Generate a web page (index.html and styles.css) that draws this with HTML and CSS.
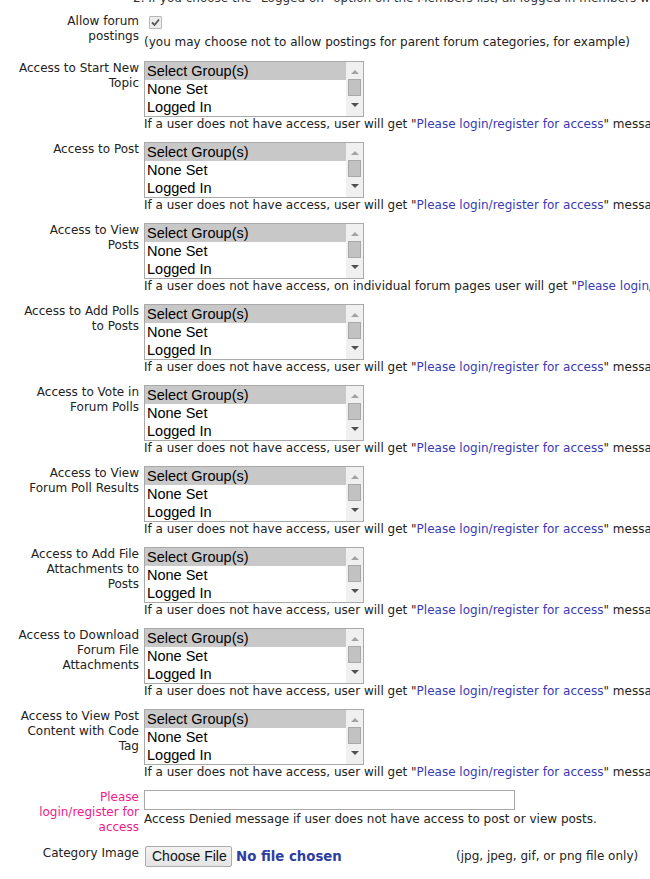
FILE: index.html
```html
<!DOCTYPE html>
<html>
<head>
<meta charset="utf-8">
<link rel="stylesheet" href="styles.css">
</head>
<body>
<div class="page">
  <div class="top-note">2. If you choose the "Logged on" option on the Members list, all logged in members will have access</div>

  <div class="row row-check">
    <div class="label">Allow forum postings</div>
    <div class="field">
      <span class="checkbox"><svg width="9" height="9" viewBox="0 0 9 9"><path d="M1 4.5 L3.5 7 L8 1.5" fill="none" stroke="#555" stroke-width="1.8"/></svg></span>
      <div class="help">(you may choose not to allow postings for parent forum categories, for example)</div>
    </div>
  </div>

  <div class="row">
    <div class="label">Access to Start New Topic</div>
    <div class="field">
      <div class="listbox"><div class="opts"><div class="opt sel">Select Group(s)</div><div class="opt">None Set</div><div class="opt">Logged In</div></div><div class="sb"><span class="arr up"></span><span class="thumb"></span><span class="arr down"></span></div></div>
      <div class="help">If a user does not have access, user will get "<span class="link">Please login/register for access</span>" message</div>
    </div>
  </div>

  <div class="row">
    <div class="label">Access to Post</div>
    <div class="field">
      <div class="listbox"><div class="opts"><div class="opt sel">Select Group(s)</div><div class="opt">None Set</div><div class="opt">Logged In</div></div><div class="sb"><span class="arr up"></span><span class="thumb"></span><span class="arr down"></span></div></div>
      <div class="help">If a user does not have access, user will get "<span class="link">Please login/register for access</span>" message</div>
    </div>
  </div>

  <div class="row">
    <div class="label">Access to View Posts</div>
    <div class="field">
      <div class="listbox"><div class="opts"><div class="opt sel">Select Group(s)</div><div class="opt">None Set</div><div class="opt">Logged In</div></div><div class="sb"><span class="arr up"></span><span class="thumb"></span><span class="arr down"></span></div></div>
      <div class="help">If a user does not have access, on individual forum pages user will get "<span class="link">Please login/register for access</span>" message</div>
    </div>
  </div>

  <div class="row">
    <div class="label">Access to Add Polls to Posts</div>
    <div class="field">
      <div class="listbox"><div class="opts"><div class="opt sel">Select Group(s)</div><div class="opt">None Set</div><div class="opt">Logged In</div></div><div class="sb"><span class="arr up"></span><span class="thumb"></span><span class="arr down"></span></div></div>
      <div class="help">If a user does not have access, user will get "<span class="link">Please login/register for access</span>" message</div>
    </div>
  </div>

  <div class="row">
    <div class="label">Access to Vote in Forum Polls</div>
    <div class="field">
      <div class="listbox"><div class="opts"><div class="opt sel">Select Group(s)</div><div class="opt">None Set</div><div class="opt">Logged In</div></div><div class="sb"><span class="arr up"></span><span class="thumb"></span><span class="arr down"></span></div></div>
      <div class="help">If a user does not have access, user will get "<span class="link">Please login/register for access</span>" message</div>
    </div>
  </div>

  <div class="row">
    <div class="label">Access to View Forum Poll Results</div>
    <div class="field">
      <div class="listbox"><div class="opts"><div class="opt sel">Select Group(s)</div><div class="opt">None Set</div><div class="opt">Logged In</div></div><div class="sb"><span class="arr up"></span><span class="thumb"></span><span class="arr down"></span></div></div>
      <div class="help">If a user does not have access, user will get "<span class="link">Please login/register for access</span>" message</div>
    </div>
  </div>

  <div class="row">
    <div class="label">Access to Add File Attachments to Posts</div>
    <div class="field">
      <div class="listbox"><div class="opts"><div class="opt sel">Select Group(s)</div><div class="opt">None Set</div><div class="opt">Logged In</div></div><div class="sb"><span class="arr up"></span><span class="thumb"></span><span class="arr down"></span></div></div>
      <div class="help">If a user does not have access, user will get "<span class="link">Please login/register for access</span>" message</div>
    </div>
  </div>

  <div class="row">
    <div class="label">Access to Download Forum File Attachments</div>
    <div class="field">
      <div class="listbox"><div class="opts"><div class="opt sel">Select Group(s)</div><div class="opt">None Set</div><div class="opt">Logged In</div></div><div class="sb"><span class="arr up"></span><span class="thumb"></span><span class="arr down"></span></div></div>
      <div class="help">If a user does not have access, user will get "<span class="link">Please login/register for access</span>" message</div>
    </div>
  </div>

  <div class="row">
    <div class="label">Access to View Post Content with Code Tag</div>
    <div class="field">
      <div class="listbox"><div class="opts"><div class="opt sel">Select Group(s)</div><div class="opt">None Set</div><div class="opt">Logged In</div></div><div class="sb"><span class="arr up"></span><span class="thumb"></span><span class="arr down"></span></div></div>
      <div class="help">If a user does not have access, user will get "<span class="link">Please login/register for access</span>" message</div>
    </div>
  </div>

  <div class="row row-text">
    <div class="label pink">Please login/register for access</div>
    <div class="field">
      <div class="textbox"></div>
      <div class="help">Access Denied message if user does not have access to post or view posts.</div>
    </div>
  </div>

  <div class="row row-file">
    <div class="label">Category Image</div>
    <div class="field file-field">
      <div class="file-input"><span class="file-btn">Choose File</span><span class="file-none">No file chosen</span></div>
      <span class="file-note">(jpg, jpeg, gif, or png file only)</span>
    </div>
  </div>
</div>
</body>
</html>
```

FILE: styles.css
```css
html, body {
  margin: 0;
  padding: 0;
  background: #fff;
}
body {
  font-family: "DejaVu Sans", Verdana, sans-serif;
  font-size: 12px;
  line-height: 15px;
  color: #222;
  overflow: hidden;
  width: 650px;
  height: 879px;
}
.page {
  width: 650px;
}
.top-note {
  margin-top: -9px;
  height: 15px;
  padding-left: 133px;
  white-space: nowrap;
  color: #333;
}
.row {
  display: grid;
  grid-template-columns: 121px 1fr;
  column-gap: 5px;
  padding-left: 18px;
  margin-bottom: 10px;
}
.row-check {
  margin-top: 8px;
  margin-bottom: 11px;
}
.label {
  text-align: right;
  color: #222;
}
.label.pink {
  color: #f0198a;
}
.field {
  min-width: 0;
  white-space: nowrap;
}
.help {
  white-space: nowrap;
  color: #222;
}
.link {
  color: #3a3ab4;
}
.checkbox {
  display: flex;
  align-items: center;
  justify-content: center;
  width: 11px;
  height: 11px;
  margin: 2px 0 6px 5px;
  border: 1px solid #b8b8b8;
  background: #ececec;
  border-radius: 1px;
}
.listbox {
  display: flex;
  width: 218px;
  height: 54px;
  border: 1px solid #a9a9a9;
  background: #fff;
}
.opts {
  flex: 1;
  font-family: "Liberation Sans", Arial, sans-serif;
  font-size: 14.5px;
  color: #000;
}
.opt {
  height: 18px;
  line-height: 18px;
  padding-left: 2px;
}
.opt.sel {
  background: #c8c8c8;
}
.sb {
  width: 17px;
  background: #f0f0f0;
  display: flex;
  flex-direction: column;
  align-items: center;
}
.arr {
  width: 0;
  height: 0;
  border-left: 4px solid transparent;
  border-right: 4px solid transparent;
}
.arr.up {
  margin-top: 8px;
  border-bottom: 4px solid #a3a3a3;
}
.thumb {
  margin-top: 5px;
  width: 11px;
  height: 15px;
  background: #c2c2c2;
  border: 1px solid #a8a8a8;
}
.arr.down {
  margin-top: 7px;
  border-top: 4px solid #505050;
}
.row-text {
  margin-top: 4px;
  margin-bottom: 11px;
}
.textbox {
  width: 369px;
  height: 18px;
  border: 1px solid #a9a9a9;
  background: #fff;
  margin-bottom: 2px;
}
.file-field {
  display: flex;
  align-items: center;
  height: 21px;
}
.file-input {
  display: flex;
  align-items: center;
  width: 312px;
}
.file-btn {
  display: inline-block;
  box-sizing: border-box;
  height: 21px;
  width: 87px;
  margin-left: 1px;
  padding: 0 6px;
  border: 1px solid #acacac;
  border-radius: 2px;
  background: linear-gradient(#f2f2f2, #e4e4e4);
  font-family: "Liberation Sans", Arial, sans-serif;
  font-size: 14px;
  line-height: 19px;
  color: #111;
  text-align: center;
}
.file-none {
  margin-left: 4px;
  font-weight: bold;
  font-size: 13.3px;
  color: #2d3ea3;
}
.file-note {
  color: #222;
}
```
